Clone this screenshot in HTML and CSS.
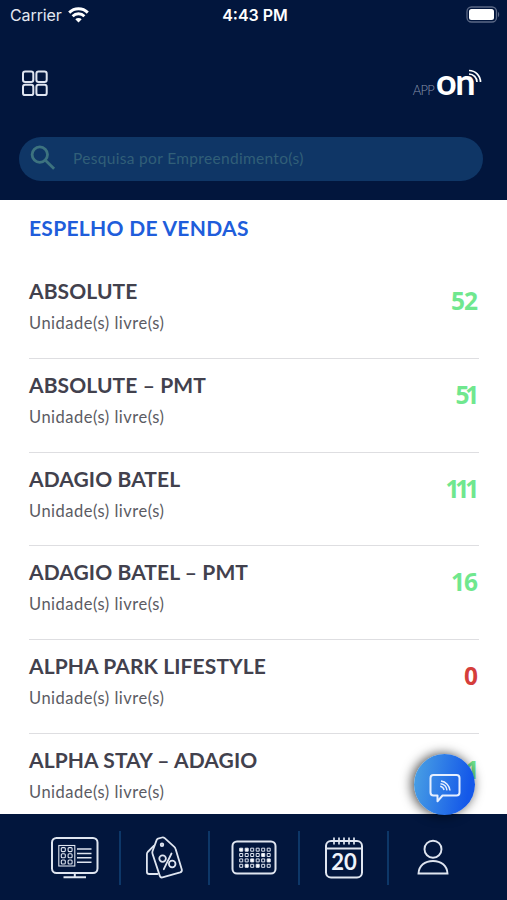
FILE: index.html
```html
<!DOCTYPE html>
<html lang="pt-BR">
<head>
    <meta charset="UTF-8">
    <meta name="viewport" content="width=device-width, initial-scale=1.0">
    <title>App On</title>
    <link rel="stylesheet" href="styles.css">
</head>
<body>

    <header class="header">
        <div class="status-bar">
            <div class="carrier">
                <span>Carrier</span>
                <svg width="21" height="16" viewBox="0 0 21 16" fill="none" stroke="#fff" stroke-width="2.9">
                    <path d="M1.2 5.6a13.2 13.2 0 0 1 18.6 0"/>
                    <path d="M4.6 9.2a8.4 8.4 0 0 1 11.8 0"/>
                    <path d="M10.5 15.6l-3.2-3.4a4.6 4.6 0 0 1 6.4 0z" fill="#fff" stroke="none"/>
                </svg>
            </div>
            <div class="time">4:43 PM</div>
            <svg class="battery" width="34" height="17" viewBox="0 0 34 17">
                <rect x="1" y="1" width="29.5" height="15" rx="4.5" fill="none" stroke="#5b6885" stroke-width="1.3"/>
                <rect x="3" y="3" width="25" height="11" rx="2.5" fill="#fff"/>
                <path d="M32 6c1.6.6 1.6 4.4 0 5z" fill="#5b6885"/>
            </svg>
        </div>

        <div class="top-row">
            <svg width="28" height="28" viewBox="0 0 28 28" fill="none" stroke="#dfe5f0" stroke-width="2">
                <rect x="2" y="2.6" width="10.3" height="10.3" rx="2.2"/>
                <rect x="15.4" y="2.6" width="10.3" height="10.3" rx="2.2"/>
                <rect x="2" y="15.8" width="10.3" height="10.3" rx="2.2"/>
                <rect x="15.4" y="15.8" width="10.3" height="10.3" rx="2.2"/>
            </svg>
            <div class="logo">
                <span class="logo-app">APP</span>
                <span class="logo-on">on</span>
                <svg class="logo-waves" width="16" height="16" viewBox="0 0 16 16" fill="none" stroke="#fff" stroke-width="1.7">
                    <path d="M3 1.5a11.5 11.5 0 0 1 11.5 11.5"/>
                    <path d="M3 5a8 8 0 0 1 8 8"/>
                </svg>
            </div>
        </div>

        <div class="search">
            <svg width="26" height="26" viewBox="0 0 26 26" fill="none" stroke="#3d737f" stroke-width="2.8">
                <circle cx="9.8" cy="9.6" r="7.7"/>
                <path d="M15.3 15.2l8.8 8.6"/>
            </svg>
            <span>Pesquisa por Empreendimento(s)</span>
        </div>
    </header>

    <main class="content">
        <h1>ESPELHO DE VENDAS</h1>
        <ul class="list">
            <li class="item">
                <div><h2>ABSOLUTE</h2><p>Unidade(s) livre(s)</p></div>
                <span class="count">52</span>
            </li>
            <li class="item">
                <div><h2>ABSOLUTE – PMT</h2><p>Unidade(s) livre(s)</p></div>
                <span class="count narrow">51</span>
            </li>
            <li class="item">
                <div><h2>ADAGIO BATEL</h2><p>Unidade(s) livre(s)</p></div>
                <span class="count narrow">111</span>
            </li>
            <li class="item">
                <div><h2>ADAGIO BATEL – PMT</h2><p>Unidade(s) livre(s)</p></div>
                <span class="count">16</span>
            </li>
            <li class="item">
                <div><h2>ALPHA PARK LIFESTYLE</h2><p>Unidade(s) livre(s)</p></div>
                <span class="count empty">0</span>
            </li>
            <li class="item">
                <div><h2>ALPHA STAY – ADAGIO</h2><p>Unidade(s) livre(s)</p></div>
                <span class="count narrow">1</span>
            </li>
        </ul>
    </main>

    <nav class="tabs">
        <a class="tab">
            <svg width="50" height="44" viewBox="0 0 50 44" fill="none" stroke="#dfe5f0" stroke-width="2">
                <rect x="3" y="2" width="45.5" height="35" rx="4.5"/>
                <path d="M25.8 37v4M14.5 41.2h22.5"/>
                <g stroke-width="1.1">
                    <rect x="9.8" y="9.5" width="16" height="20.5"/>
                    <path d="M28 13h14.5M28 17.4h14.5M28 21.8h14.5M28 26.2h14.5" stroke-width="1.5"/>
                    <rect x="12.3" y="11.6" width="4" height="4" rx="1"/><rect x="19.1" y="11.6" width="4" height="4" rx="1"/>
                    <rect x="12.3" y="17.8" width="4" height="4" rx="1"/><rect x="19.1" y="17.8" width="4" height="4" rx="1"/>
                    <rect x="12.3" y="24" width="4" height="4" rx="1"/><rect x="19.1" y="24" width="4" height="4" rx="1"/>
                </g>
            </svg>
        </a>
        <a class="tab">
            <svg width="40" height="44" viewBox="0 0 40 44" fill="none" stroke="#dfe5f0" stroke-width="1.8" stroke-linejoin="round" stroke-linecap="round">
                <path d="M13 2.6l4-1.1q1.5-.4 2.7.7l9.6 8.6q1 .9 1.3 2.2l6.2 20.4q.5 2.3-1.6 3l-17.7 5q-2 .5-2.7-1.5L7.5 17.7q-.4-1.3 0-2.5L11.7 3.9q.4-1 1.3-1.3z"/>
                <path d="M9 9.6L2.7 16q-.8.9-.8 2.2v17.5q0 2.3 2.3 2.3h8.3"/>
                <circle cx="17" cy="8.8" r="1.3"/>
                <circle cx="17.6" cy="22.6" r="3.3"/>
                <circle cx="27.2" cy="28" r="3.3"/>
                <path d="M26.5 17.5l-7.7 15.7"/>
            </svg>
        </a>
        <a class="tab">
            <svg width="46" height="44" viewBox="0 0 46 44" fill="none" stroke="#dfe5f0">
                <rect x="1.5" y="5.5" width="43" height="32" rx="4.5" stroke-width="2"/>
                <g stroke-width="1">
                    <path d="M8.7 12.2h3v3h-3zM14.2 12.2h3v3h-3z" fill="#fff"/>
                    <path d="M19.7 12.2h3v3h-3zM25.2 12.2h3v3h-3zM30.7 12.2h3v3h-3zM36.2 12.2h3v3h-3z"/>
                    <path d="M8.7 17.5h3v3h-3zM14.2 17.5h3v3h-3zM19.7 17.5h3v3h-3zM25.2 17.5h3v3h-3zM36.2 17.5h3v3h-3z"/>
                    <path d="M30.7 17.5h3v3h-3z" fill="#fff"/>
                    <path d="M8.7 22.9h3v3h-3zM14.2 22.9h3v3h-3zM25.2 22.9h3v3h-3zM30.7 22.9h3v3h-3z"/>
                    <path d="M19.7 22.9h3v3h-3zM36.2 22.9h3v3h-3z" fill="#fff"/>
                    <path d="M8.7 28.3h3v3h-3zM19.7 28.3h3v3h-3zM30.7 28.3h3v3h-3zM36.2 28.3h3v3h-3z"/>
                    <path d="M14.2 28.3h3v3h-3zM25.2 28.3h3v3h-3z" fill="#fff"/>
                </g>
            </svg>
        </a>
        <a class="tab">
            <svg width="40" height="44" viewBox="0 0 40 44" fill="none" stroke="#dfe5f0" stroke-width="2">
                <rect x="2" y="5" width="36" height="36.5" rx="5"/>
                <path d="M2 12.6h36"/>
                <path d="M10 1.5v7M15 1.5v7M20 1.5v7M25 1.5v7M30 1.5v7" stroke-width="1.7"/>
                <text class="tab-day" x="20" y="34" text-anchor="middle">20</text>
            </svg>
        </a>
        <a class="tab">
            <svg width="36" height="44" viewBox="0 0 36 44" fill="none" stroke="#dfe5f0" stroke-width="1.9">
                <circle cx="18" cy="13.2" r="8.5"/>
                <path d="M3.5 37.5c.4-7.8 6.3-12.5 14.5-12.5s14.1 4.7 14.5 12.5z"/>
            </svg>
        </a>
    </nav>

    <a class="chat">
        <svg width="34" height="34" viewBox="0 0 34 34" fill="none" stroke="#e6efff" stroke-width="2" stroke-linejoin="round">
            <path d="M5.5 4h23q3 0 3 3v14.5q0 3-3 3h-14l-5 5.8v-5.8h-4q-3 0-3-3v-14.5q0-3 3-3z"/>
            <path d="M13 10a10.5 10.5 0 0 1 9 9.5M12.5 12.8a7.5 7.5 0 0 1 6.5 6.5M12.2 15.3q3 .6 3.9 3.7" stroke-width="1.4"/>
        </svg>
    </a>

</body>
</html>
```
FILE: styles.css
```css
* {
    box-sizing: border-box;
}
body {
    display: flex;
    flex-direction: column;
    height: 900px;
    margin: 0;
    overflow: hidden;
    font-family: Lato, "Open Sans", sans-serif;
    background-color: #fff;
}
h1, h2, p, ul {
    margin: 0;
    padding: 0;
    white-space: nowrap;
}
.header {
    flex: none;
    height: 200px;
    background-color: #02163d;
}
.status-bar {
    display: grid;
    grid-template-columns: 1fr auto 1fr;
    align-items: center;
    height: 29px;
    padding: 0 7px 0 10px;
    font-family: Inter, sans-serif;
    font-size: 16px;
    color: #e3e8f1;
}
.carrier {
    display: flex;
    align-items: center;
    gap: 6px;
    letter-spacing: -0.1px;
}
.time {
    font-weight: 600;
    color: #fff;
}
.battery {
    justify-self: end;
}
.top-row {
    display: flex;
    justify-content: space-between;
    align-items: center;
    height: 108px;
    padding: 0 25px 0 21px;
}
.logo {
    display: flex;
    align-items: baseline;
    position: relative;
    color: #fff;
}
.logo-app {
    font-size: 13px;
    font-weight: 300;
    letter-spacing: -0.8px;
    color: #8792aa;
}
.logo-on {
    margin-left: 2px;
    padding-right: 8px;
    font-size: 36px;
    font-weight: bold;
    line-height: 25px;
    letter-spacing: -1.5px;
}
.logo-waves {
    position: absolute;
    top: 0;
    right: 0;
}
.search {
    display: flex;
    align-items: center;
    gap: 17px;
    height: 44px;
    margin: 0 24px 0 19px;
    padding: 0 0 2px 11px;
    border-radius: 22px;
    background-color: #0f3666;
    font-size: 15.5px;
    letter-spacing: 0.32px;
    color: #315f78;
}
.content {
    flex: 1;
    overflow: hidden;
    padding: 15px 28px 0 29px;
}
h1 {
    height: 50.4px;
    font-size: 21px;
    line-height: 26px;
    letter-spacing: 0.3px;
    color: #205ddb;
}
.list {
    list-style: none;
}
.item {
    display: flex;
    justify-content: space-between;
    height: 93.7px;
    padding-top: 13px;
    border-bottom: 1px solid #dedee1;
}
h2 {
    font-size: 21px;
    line-height: 26px;
    letter-spacing: 0.1px;
    color: #42414d;
}
.item p {
    margin-top: 8px;
    font-size: 16.5px;
    line-height: 22px;
    letter-spacing: 0.5px;
    color: #5b5b63;
}
.count {
    padding: 8px 2px 0 0;
    font-family: "Open Sans", sans-serif;
    font-size: 24.5px;
    font-weight: bold;
    line-height: 30px;
    letter-spacing: -1px;
    color: #70e78e;
}
.count.narrow {
    padding-right: 4px;
    letter-spacing: -4.2px;
}
.count.empty {
    color: #d53e3b;
}
.tabs {
    display: grid;
    grid-template-columns: repeat(5, 89.5px);
    flex: none;
    height: 86px;
    padding: 17px 0 15px 29.4px;
    background-color: #02163d;
}
.tab {
    display: flex;
    justify-content: center;
    align-items: center;
}
.tab + .tab {
    border-left: 2px solid #0d3768;
}
.tab-day {
    font-size: 22px;
    font-weight: bold;
    fill: #eef2fa;
    stroke: none;
}
/* floats over the list */
.chat {
    position: absolute;
    right: 32px;
    bottom: 85px;
    display: flex;
    justify-content: center;
    align-items: center;
    width: 61px;
    height: 61px;
    padding-top: 6px;
    border-radius: 50%;
    background: linear-gradient(100deg, #4ba3e4, #1458e9 85%);
    box-shadow: -2px 0 12px rgba(0, 0, 0, 0.75);
}
```
